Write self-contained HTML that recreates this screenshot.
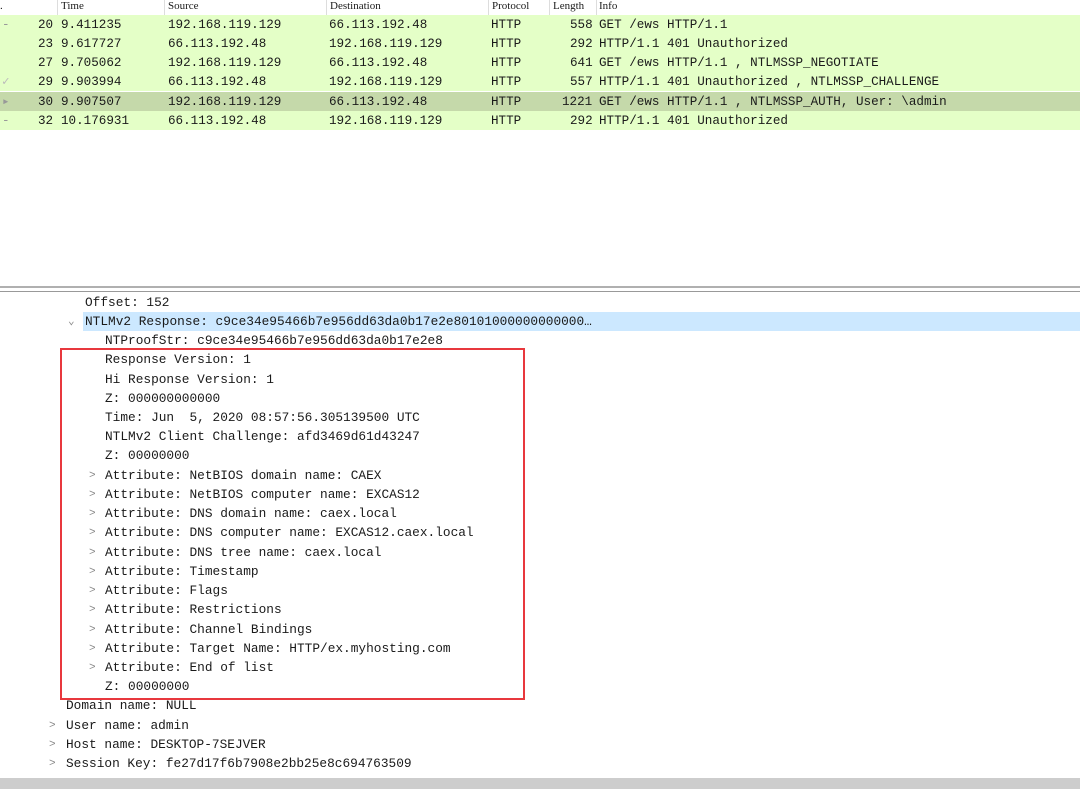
<!DOCTYPE html>
<html><head><style>
body{margin:0;width:1080px;height:789px;background:#fff;overflow:hidden;position:relative;font-family:"Liberation Mono",monospace;color:#1a1a1a}
.hd{position:absolute;top:0;left:0;width:1080px;height:15px;background:#fff;font-family:"Liberation Serif",serif;font-size:11px}
.hd span{position:absolute;top:0}
.hd i{position:absolute;top:0;width:1px;height:15px;background:#ddd}
.row{position:absolute;left:0;width:1080px;height:19px;background:#e4ffc7;font-size:12.6px;line-height:20px}
.row span{position:absolute;top:0;white-space:pre}
.sel{background:#c5d9aa}
.d{position:absolute;font-size:12.8px;line-height:20px;white-space:pre;height:19px}
.ar{position:absolute;font-size:11px;color:#888;line-height:20px}
</style></head><body>
<div class="hd"><span style="left:0">.</span><span style="left:61px">Time</span><span style="left:168px">Source</span><span style="left:330px">Destination</span><span style="left:492px">Protocol</span><span style="left:553px">Length</span><span style="left:599px">Info</span>
<i style="left:57px"></i><i style="left:164px"></i><i style="left:326px"></i><i style="left:488px"></i><i style="left:549px"></i><i style="left:596px"></i></div>

<div class="row" style="top:15px"><span style="left:2px;color:#999">-</span><span style="left:38px">20</span><span style="left:61px">9.411235</span><span style="left:168px">192.168.119.129</span><span style="left:329px">66.113.192.48</span><span style="left:491px">HTTP</span><span style="left:570px">558</span><span style="left:599px">GET /ews HTTP/1.1</span></div>
<div class="row" style="top:34px"><span style="left:38px">23</span><span style="left:61px">9.617727</span><span style="left:168px">66.113.192.48</span><span style="left:329px">192.168.119.129</span><span style="left:491px">HTTP</span><span style="left:570px">292</span><span style="left:599px">HTTP/1.1 401 Unauthorized</span></div>
<div class="row" style="top:53px"><span style="left:38px">27</span><span style="left:61px">9.705062</span><span style="left:168px">192.168.119.129</span><span style="left:329px">66.113.192.48</span><span style="left:491px">HTTP</span><span style="left:570px">641</span><span style="left:599px">GET /ews HTTP/1.1 , NTLMSSP_NEGOTIATE</span></div>
<div class="row" style="top:72px"><span style="left:2px;color:#bbb">✓</span><span style="left:38px">29</span><span style="left:61px">9.903994</span><span style="left:168px">66.113.192.48</span><span style="left:329px">192.168.119.129</span><span style="left:491px">HTTP</span><span style="left:570px">557</span><span style="left:599px">HTTP/1.1 401 Unauthorized , NTLMSSP_CHALLENGE</span></div>
<div class="row sel" style="top:92px"><span style="left:2px;color:#999">▸</span><span style="left:38px">30</span><span style="left:61px">9.907507</span><span style="left:168px">192.168.119.129</span><span style="left:329px">66.113.192.48</span><span style="left:491px">HTTP</span><span style="left:562px">1221</span><span style="left:599px">GET /ews HTTP/1.1 , NTLMSSP_AUTH, User: \admin</span></div>
<div class="row" style="top:111px"><span style="left:2px;color:#999">-</span><span style="left:38px">32</span><span style="left:61px">10.176931</span><span style="left:168px">66.113.192.48</span><span style="left:329px">192.168.119.129</span><span style="left:491px">HTTP</span><span style="left:570px">292</span><span style="left:599px">HTTP/1.1 401 Unauthorized</span></div>

<div style="position:absolute;top:286px;left:0;width:1080px;height:2px;background:#b0b0b0"></div>
<div style="position:absolute;top:291px;left:0;width:1080px;height:1px;background:#999"></div>

<div style="position:absolute;top:312px;left:83px;width:997px;height:19px;background:#cce8ff"></div>
<div class="d" style="top:293px;left:85px">Offset: 152</div>
<div class="ar" style="top:312px;left:68px">⌄</div>
<div class="d" style="top:312px;left:85px">NTLMv2 Response: c9ce34e95466b7e956dd63da0b17e2e80101000000000000…</div>
<div class="d" style="top:331px;left:105px">NTProofStr: c9ce34e95466b7e956dd63da0b17e2e8</div>
<div class="d" style="top:350px;left:105px">Response Version: 1</div>
<div class="d" style="top:370px;left:105px">Hi Response Version: 1</div>
<div class="d" style="top:389px;left:105px">Z: 000000000000</div>
<div class="d" style="top:408px;left:105px">Time: Jun  5, 2020 08:57:56.305139500 UTC</div>
<div class="d" style="top:427px;left:105px">NTLMv2 Client Challenge: afd3469d61d43247</div>
<div class="d" style="top:446px;left:105px">Z: 00000000</div>
<div class="ar" style="top:466px;left:89px">&gt;</div><div class="d" style="top:466px;left:105px">Attribute: NetBIOS domain name: CAEX</div>
<div class="ar" style="top:485px;left:89px">&gt;</div><div class="d" style="top:485px;left:105px">Attribute: NetBIOS computer name: EXCAS12</div>
<div class="ar" style="top:504px;left:89px">&gt;</div><div class="d" style="top:504px;left:105px">Attribute: DNS domain name: caex.local</div>
<div class="ar" style="top:523px;left:89px">&gt;</div><div class="d" style="top:523px;left:105px">Attribute: DNS computer name: EXCAS12.caex.local</div>
<div class="ar" style="top:543px;left:89px">&gt;</div><div class="d" style="top:543px;left:105px">Attribute: DNS tree name: caex.local</div>
<div class="ar" style="top:562px;left:89px">&gt;</div><div class="d" style="top:562px;left:105px">Attribute: Timestamp</div>
<div class="ar" style="top:581px;left:89px">&gt;</div><div class="d" style="top:581px;left:105px">Attribute: Flags</div>
<div class="ar" style="top:600px;left:89px">&gt;</div><div class="d" style="top:600px;left:105px">Attribute: Restrictions</div>
<div class="ar" style="top:620px;left:89px">&gt;</div><div class="d" style="top:620px;left:105px">Attribute: Channel Bindings</div>
<div class="ar" style="top:639px;left:89px">&gt;</div><div class="d" style="top:639px;left:105px">Attribute: Target Name: HTTP/ex.myhosting.com</div>
<div class="ar" style="top:658px;left:89px">&gt;</div><div class="d" style="top:658px;left:105px">Attribute: End of list</div>
<div class="d" style="top:677px;left:105px">Z: 00000000</div>
<div class="d" style="top:696px;left:66px">Domain name: NULL</div>
<div class="ar" style="top:716px;left:49px">&gt;</div><div class="d" style="top:716px;left:66px">User name: admin</div>
<div class="ar" style="top:735px;left:49px">&gt;</div><div class="d" style="top:735px;left:66px">Host name: DESKTOP-7SEJVER</div>
<div class="ar" style="top:754px;left:49px">&gt;</div><div class="d" style="top:754px;left:66px">Session Key: fe27d17f6b7908e2bb25e8c694763509</div>

<div style="position:absolute;left:60px;top:348px;width:461px;height:348px;border:2px solid #e8383d"></div>
<div style="position:absolute;left:0;top:778px;width:1080px;height:11px;background:#cdcdcd"></div>
</body></html>
